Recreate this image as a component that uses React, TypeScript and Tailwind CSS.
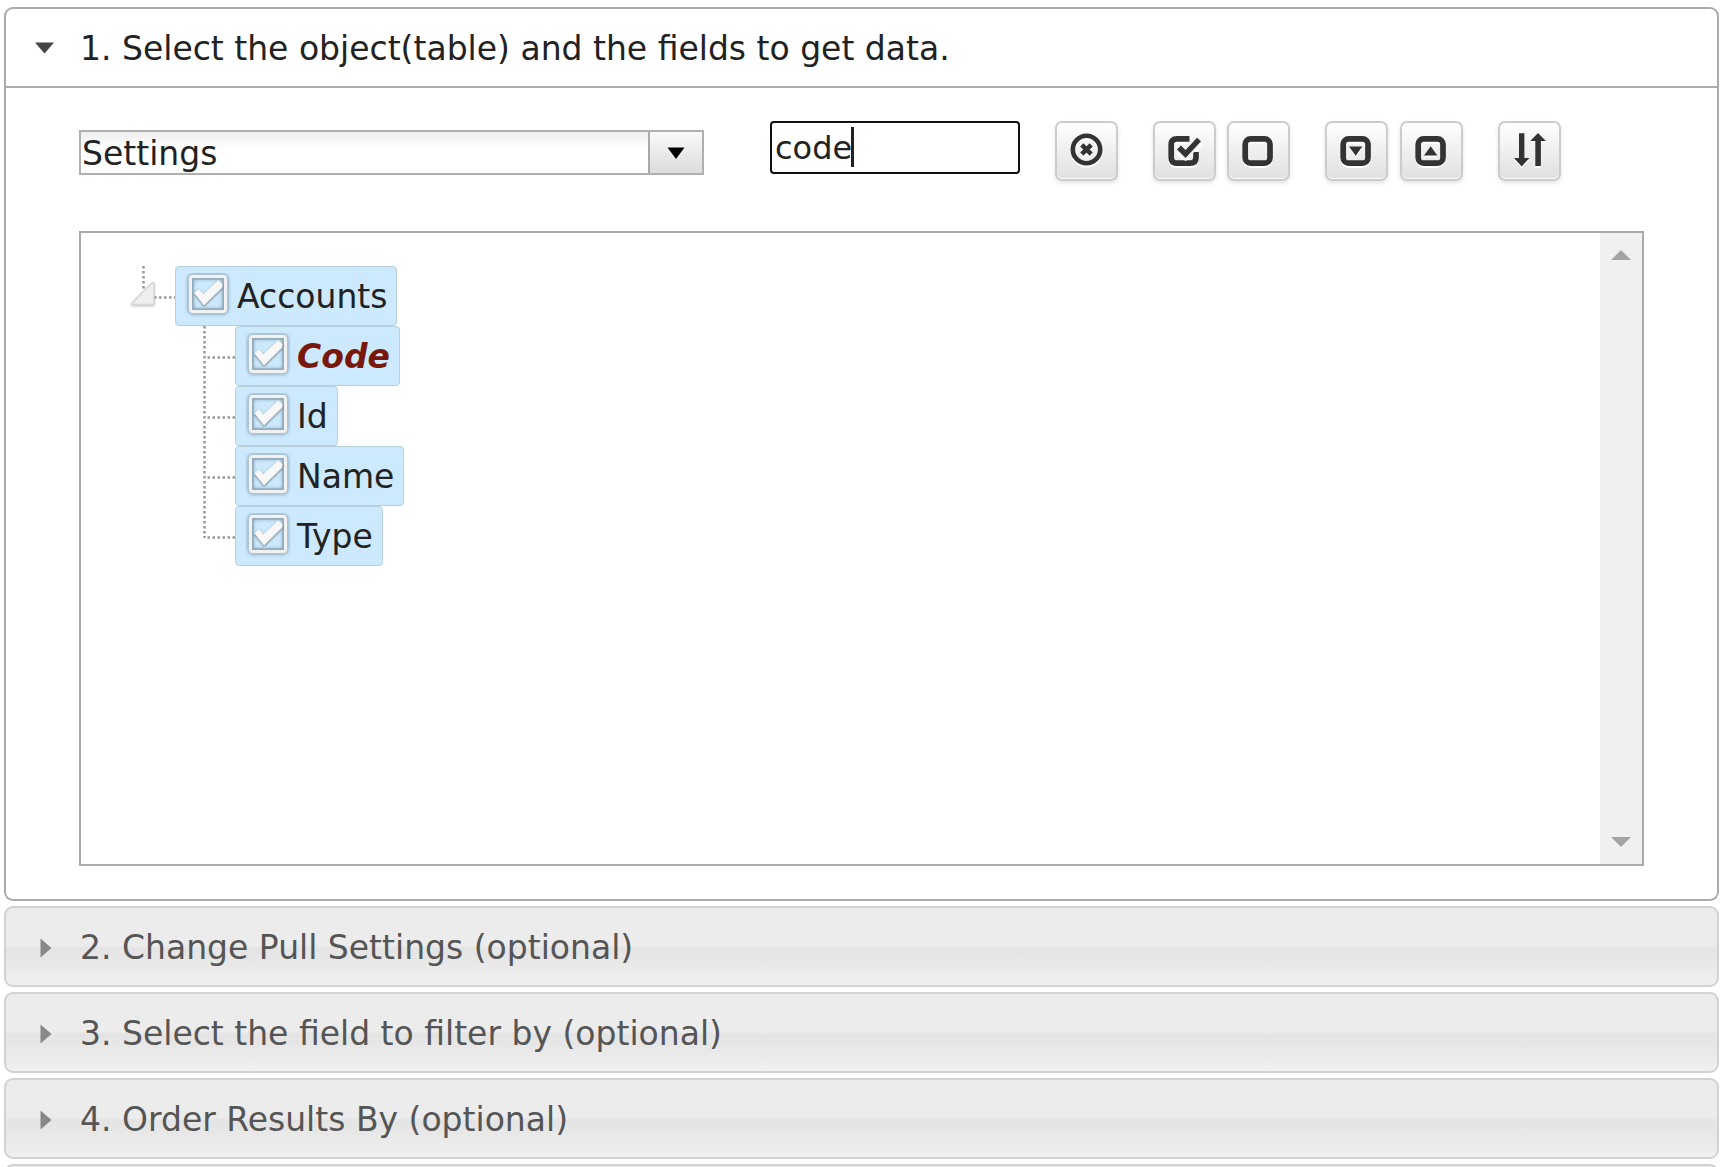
import React, { useState } from "react";

function ToolButton({ label, children }: { label: string; children: React.ReactNode }) {
  return (
    <button
      type="button"
      aria-label={label}
      className="flex h-[60px] w-[63px] shrink-0 items-center justify-center rounded-[7px] border-2 border-[#cccccc] bg-gradient-to-b from-white to-[#e0e0e0] text-[#333333] shadow-[inset_0_-1px_0_#fff,0_2px_4px_rgba(0,0,0,0.12)]"
    >
      <svg
        width="40"
        height="40"
        viewBox="0 0 40 40"
        fill="none"
        stroke="currentColor"
        className="shrink-0 drop-shadow-[0_2px_0_#ffffff]"
      >
        {children}
      </svg>
    </button>
  );
}

const roundedBox = <rect x="6.200" y="7.800" width="24.800" height="24.400" rx="5.500" strokeWidth="5.700" />;

function Header({ title, open = false }: { title: string; open?: boolean }) {
  return (
    <button
      type="button"
      aria-expanded={open}
      className={
        open
          ? "flex h-[81px] w-full items-center rounded-t-[9px] border-2 border-[#aaaaaa] bg-white text-left text-[33px] text-[#222222]"
          : "flex h-[81px] w-full shrink-0 items-center rounded-[9px] border-2 border-[#d2d2d2] bg-[linear-gradient(#ececec_0%,#ececec_49%,#e4e4e4_52%,#e6e6e6_62%,#f0f0f0_100%)] text-left text-[33px] text-[#555555]"
      }
    >
      <svg width="74" height="24" viewBox="0 0 74 24" className="shrink-0">
        {open ? (
          <path d="M29 6.500H48L38.500 17.500Z" fill="#454545" />
        ) : (
          <path d="M34.500 3.500V22.500L45.500 13Z" fill="#888888" />
        )}
      </svg>
      <span className="pt-0.5 whitespace-nowrap">{title}</span>
    </button>
  );
}

function Node({ label, match = false }: { label: string; match?: boolean }) {
  const [checked, setChecked] = useState(true);
  return (
    <label className="flex h-[60px] items-center rounded-[4px] border border-[#b9cedb] bg-[#cce9fd] pr-[9px] pl-[9px] text-[33px]">
      <input
        type="checkbox"
        checked={checked}
        onChange={() => setChecked(!checked)}
        className="sr-only"
      />
      <svg width="46" height="46" viewBox="0 0 46 46" fill="none" className="mr-1.5 shrink-0">
        <g className="drop-shadow-[0_0_2px_rgba(70,90,105,0.9)]">
          <rect x="5.500" y="3.500" width="35" height="35" rx="2.500" stroke="#f2f2f2" strokeWidth="3.500" />
        </g>
        <rect x="7.800" y="5.800" width="30.400" height="30.400" stroke="#8fa9ba" strokeWidth="1.300" />
        {checked && (
          <path
            d="M9.500 20L14 16.500L18.500 21.500L33 7.500L37 11V14.500L19 32Z"
            fill="#f8f8f8"
            stroke="#f0f0f0"
            strokeLinejoin="round"
            className="drop-shadow-[0_1px_1px_rgba(70,90,105,0.8)]"
          />
        )}
      </svg>
      <span className={match ? "pt-0.5 font-bold text-[#78180d] italic" : "pt-0.5 text-[#222222]"}>{label}</span>
    </label>
  );
}

const fields = ["Code", "Id", "Name", "Type"];

export default function App() {
  const [query, setQuery] = useState("code");
  return (
    <main className="flex h-screen flex-col gap-[5px] overflow-hidden bg-white pt-[7px] pr-2.5 pl-1 font-['Verdana','DejaVu_Sans',sans-serif] leading-10">
      <section className="shrink-0">
        <Header title="1. Select the object(table) and the fields to get data." open />
        <div className="rounded-b-[9px] border-2 border-t-0 border-[#aaaaaa] px-[73px] py-[33px]">
          <div className="flex items-start">
            <div className="relative mt-[9px] w-[625px]">
              <select
                aria-label="Object"
                className="block h-[45px] w-full appearance-none border-2 border-[#b0b0b0] bg-[linear-gradient(#eeeeee_0%,#ffffff_40%)] pt-0.5 pl-px text-[33px] leading-10 text-[#222222]"
              >
                <option>Settings</option>
              </select>
              <span className="pointer-events-none absolute inset-y-0.5 right-0.5 flex w-[54px] items-center justify-center border-l-2 border-[#aaaaaa] bg-gradient-to-b from-[#fafafa] to-[#dcdcdc]">
                <svg width="18" height="12" viewBox="0 0 18 12">
                  <path d="M0.500 0.500H17.500L9 12Z" fill="#000" />
                </svg>
              </span>
            </div>
            <div className="relative ml-[66px] w-[250px]">
              <input
                type="text"
                aria-label="Search fields"
                value={query}
                onChange={(e) => setQuery(e.target.value)}
                className="block h-[53px] w-full rounded-[4px] border-2 border-[#101010] bg-white px-[3px] text-[32px] text-[#222222] outline-none"
              />
              <span className="pointer-events-none absolute top-1.5 left-[81px] h-10 w-[3px] bg-[#222222]" />
            </div>
            <div className="ml-[35px] flex gap-[35px]">
              <ToolButton label="Clear search">
                <circle cx="19.500" cy="18.500" r="13.700" strokeWidth="4.600" />
                <path d="M14.800 13.800L24.200 23.200M24.200 13.800L14.800 23.200" strokeWidth="4.500" />
              </ToolButton>
              <div className="flex gap-[11px]">
                <ToolButton label="Select all">
                  <path
                    d="M24.500 7.800H12Q6.200 7.800 6.200 13.500V26.500Q6.200 32.200 12 32.200H25Q31 32.200 31 26.500V21"
                    strokeWidth="5.700"
                  />
                  <path d="M14.500 17L20.500 23L34 8.500" stroke="#f2f2f2" strokeWidth="10" />
                  <path d="M14 16.500L20.500 23L34 8.500" strokeWidth="5.500" />
                </ToolButton>
                <ToolButton label="Deselect all">{roundedBox}</ToolButton>
              </div>
              <div className="flex gap-3">
                <ToolButton label="Expand all">
                  {roundedBox}
                  <path d="M12 15.500H25.300L18.700 24.800Z" fill="currentColor" stroke="none" />
                </ToolButton>
                <ToolButton label="Collapse all">
                  {roundedBox}
                  <path d="M12 24.500H25.300L18.700 15.200Z" fill="currentColor" stroke="none" />
                </ToolButton>
              </div>
              <ToolButton label="Sort">
                <path
                  d="M9 2.300H14.400V27H19.500L11.700 35.500L4 27H9ZM25.300 35V10H20.300L28 2L35.900 10H30.900V35Z"
                  fill="currentColor"
                  stroke="none"
                />
              </ToolButton>
            </div>
          </div>

          <div className="mt-[50px] flex h-[635px] justify-between border-2 border-[#aaaaaa]">
            <ul className="pt-[33px] pl-12">
              <li>
                <div className="flex">
                  <button type="button" aria-label="Collapse Accounts">
                    <svg width="46" height="60" viewBox="0 0 46 60" fill="none">
                      <path
                        d="M14.500 0V23M25 31.500H46"
                        stroke="#999999"
                        strokeWidth="2.500"
                        strokeDasharray="2.500 2.500"
                      />
                      <path
                        d="M25 17V37Q25 38.500 23.500 38.500H4Q2 38.500 3.500 36.500L23 17Z"
                        fill="#eeeeee"
                        stroke="#d8d8d8"
                        strokeWidth="1.500"
                        className="drop-shadow-[0_1px_1px_rgba(0,0,0,0.25)]"
                      />
                    </svg>
                  </button>
                  <Node label="Accounts" />
                </div>
                <ul className="pl-[74px]">
                  {fields.map((field, i) => (
                    <li key={field} className="flex">
                      <svg width="32" height="60" viewBox="0 0 32 60" fill="none" className="shrink-0">
                        <path
                          d={i === fields.length - 1 ? "M1.500 0V32M4.500 31.500H32" : "M1.500 0V60M4.500 31.500H32"}
                          stroke="#999999"
                          strokeWidth="2.500"
                          strokeDasharray="2.500 2.500"
                        />
                      </svg>
                      <Node label={field} match={field.toLowerCase() === query.toLowerCase()} />
                    </li>
                  ))}
                </ul>
              </li>
            </ul>
            <div className="flex w-[42px] flex-col items-center justify-between bg-[#f0f0f0] py-[17px]">
              <svg width="20" height="10" viewBox="0 0 20 10">
                <path d="M0 10H20L10 0Z" fill="#a3a3a3" />
              </svg>
              <svg width="20" height="10" viewBox="0 0 20 10">
                <path d="M0 0H20L10 10Z" fill="#a3a3a3" />
              </svg>
            </div>
          </div>
        </div>
      </section>
      <Header title="2. Change Pull Settings (optional)" />
      <Header title="3. Select the field to filter by (optional)" />
      <Header title="4. Order Results By (optional)" />
      <div className="h-[81px] shrink-0 rounded-[9px] border-2 border-[#d2d2d2] bg-[#ececec]" />
    </main>
  );
}
